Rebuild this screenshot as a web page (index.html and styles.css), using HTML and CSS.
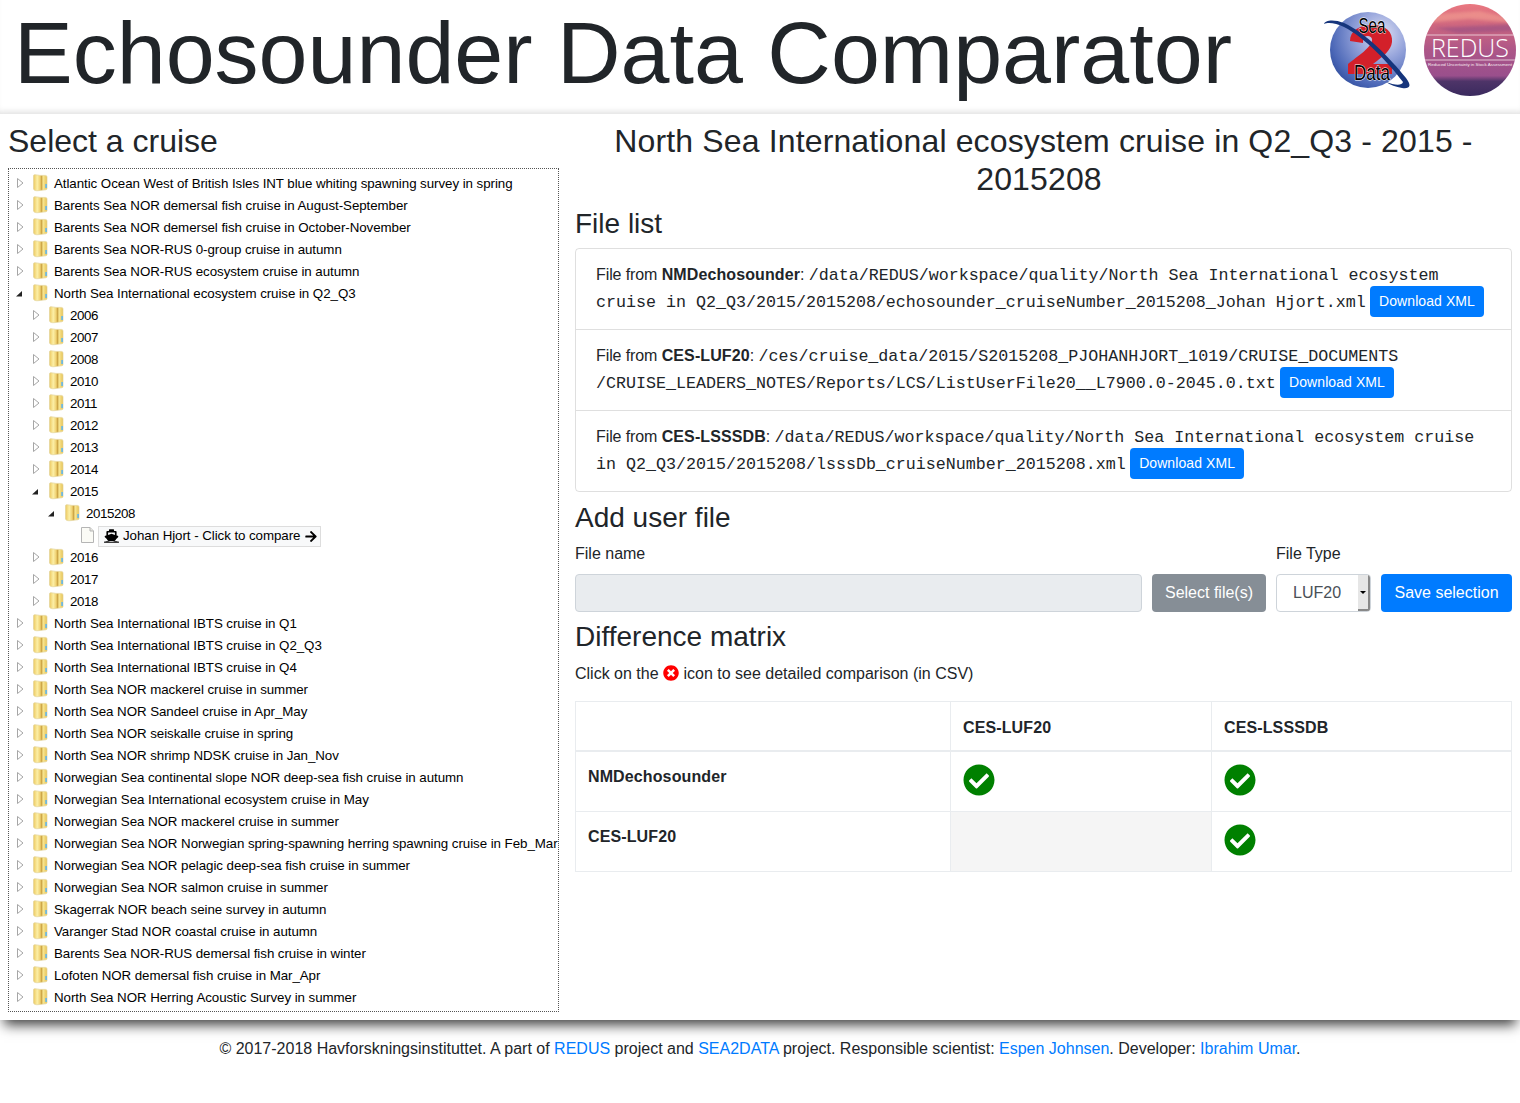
FILE: index.html
```html
<!DOCTYPE html>
<html lang="en">
<head>
<meta charset="utf-8">
<title>Echosounder Data Comparator</title>
<link rel="stylesheet" href="styles.css">
</head>
<body>
<svg class="defs" width="0" height="0" aria-hidden="true">
  <defs>
    <linearGradient id="fg" x1="0" x2="1" y1="0" y2="0">
      <stop offset="0" stop-color="#ecc860"/><stop offset=".28" stop-color="#fcefa6"/><stop offset=".5" stop-color="#efd070"/><stop offset=".58" stop-color="#c9a040"/><stop offset=".72" stop-color="#f8e690"/><stop offset="1" stop-color="#e6c258"/>
    </linearGradient>
    <symbol id="folder" viewBox="0 0 15 18">
      <path d="M.5 2Q.5.5 2 .7L7 1.4 12.5 1.4Q14 1.4 14 3V14.5Q14 15.8 12.5 15.8L6 16.6Q1 17.2.5 15Z" fill="url(#fg)" stroke="#e4d49a" stroke-width=".7"/>
      <rect x="12.2" y="10" width="1.8" height="4" fill="#6fb8e0"/>
    </symbol>
    <symbol id="closed" viewBox="0 0 10 12"><path d="M2.5 1.5L8 6 2.5 10.5Z" fill="#fff" stroke="#a6a6a6"/></symbol>
    <symbol id="open" viewBox="0 0 10 12"><path d="M1 9.5H7V4Z" fill="#222"/></symbol>
    <symbol id="check" viewBox="0 0 512 512"><path fill="green" d="M504 256c0 136.967-111.033 248-248 248S8 392.967 8 256 119.033 8 256 8s248 111.033 248 248zM227.314 387.314l184-184c6.248-6.248 6.248-16.379 0-22.627l-22.627-22.627c-6.248-6.249-16.379-6.249-22.628 0L216 308.118l-70.059-70.059c-6.248-6.248-16.379-6.248-22.628 0l-22.627 22.627c-6.248 6.248-6.248 16.379 0 22.627l104 104c6.249 6.249 16.379 6.249 22.628.001z"/></symbol>
  </defs>
</svg>

<header class="top">
  <h1 class="title">Echosounder Data Comparator</h1>
  <div class="logos">
    <svg class="logo-s2d" viewBox="0 0 92 92" role="img" aria-label="Sea2Data">
      <defs>
        <radialGradient id="sphere" cx=".68" cy=".3" r=".9">
          <stop offset="0" stop-color="#dfe2f4"/><stop offset=".35" stop-color="#98a6dc"/><stop offset=".75" stop-color="#4a66b6"/><stop offset="1" stop-color="#1f3d8a"/>
        </radialGradient>
      </defs>
      <circle cx="48" cy="46" r="38" fill="url(#sphere)"/>
      <path d="M30 37C30 27 39 21 52 21 66 21 73 28 72 38 71 47 63 52 53 60H72V70H28V60C38 52 52 43 52 36 52 33 50 32 47 32 44 32 43 35 43 39Z" fill="#d3202a"/>
      <path transform="translate(2 0)" d="M2 20C3 16 12 15 22 19 44 29 68 54 84 74 90 82 88 85 80 84 74 83 68 81 64 78 72 81 80 82 81 78 66 58 42 33 22 23 14 19 6 18 2 20Z" fill="#16357c"/>
      <text class="s2d-t" x="52" y="29" text-anchor="middle" textLength="27" lengthAdjust="spacingAndGlyphs">Sea</text>
      <text class="s2d-t" x="52" y="76" text-anchor="middle" textLength="36" lengthAdjust="spacingAndGlyphs">Data</text>
    </svg>
    <svg class="logo-redus" viewBox="0 0 92 92" role="img" aria-label="REDUS">
      <defs>
        <linearGradient id="sunset" x1="0" x2="0" y1="0" y2="1">
          <stop offset="0" stop-color="#ea7880"/><stop offset=".22" stop-color="#d0687f"/><stop offset=".5" stop-color="#ad5688"/><stop offset=".78" stop-color="#9a4f8c"/><stop offset=".84" stop-color="#4e3468"/><stop offset="1" stop-color="#3a2a5e"/>
        </linearGradient>
        <clipPath id="redusclip"><circle cx="46" cy="46" r="46"/></clipPath>
        <filter id="soft" x="-10%" y="-50%" width="120%" height="200%"><feGaussianBlur stdDeviation="1.6"/></filter>
      </defs>
      <circle cx="46" cy="46" r="46" fill="url(#sunset)"/>
      <g clip-path="url(#redusclip)">
        <path d="M0 11L55 7 92 15V19L45 15 0 19Z" fill="#f7a694" opacity=".55" filter="url(#soft)"/>
        <path d="M10 24L92 20V27L34 29Z" fill="#8a4a84" opacity=".5" filter="url(#soft)"/>
        <path d="M0 31H92M0 56H92" stroke="#f3dfe6" stroke-width=".8"/>
      </g>
      <text class="redus-t" x="46" y="53" text-anchor="middle" textLength="78" lengthAdjust="spacingAndGlyphs">REDUS</text>
      <text class="redus-s" x="46" y="62" text-anchor="middle" textLength="84" lengthAdjust="spacingAndGlyphs">Reduced Uncertainty in Stock Assessment</text>
    </svg>
  </div>
</header>

<main class="main">
  <section class="left">
    <h2 class="head">Select a cruise</h2>
    <ul class="tree">
      <li class="row"><svg class="tw"><use href="#closed"/></svg><svg class="fo"><use href="#folder"/></svg><span>Atlantic Ocean West of British Isles INT blue whiting spawning survey in spring</span></li>
      <li class="row"><svg class="tw"><use href="#closed"/></svg><svg class="fo"><use href="#folder"/></svg><span>Barents Sea NOR demersal fish cruise in August-September</span></li>
      <li class="row"><svg class="tw"><use href="#closed"/></svg><svg class="fo"><use href="#folder"/></svg><span>Barents Sea NOR demersel fish cruise in October-November</span></li>
      <li class="row"><svg class="tw"><use href="#closed"/></svg><svg class="fo"><use href="#folder"/></svg><span>Barents Sea NOR-RUS 0-group cruise in autumn</span></li>
      <li class="row"><svg class="tw"><use href="#closed"/></svg><svg class="fo"><use href="#folder"/></svg><span>Barents Sea NOR-RUS ecosystem cruise in autumn</span></li>
      <li class="row"><svg class="tw"><use href="#open"/></svg><svg class="fo"><use href="#folder"/></svg><span>North Sea International ecosystem cruise in Q2_Q3</span></li>
      <li class="row l2"><svg class="tw"><use href="#closed"/></svg><svg class="fo"><use href="#folder"/></svg><span>2006</span></li>
      <li class="row l2"><svg class="tw"><use href="#closed"/></svg><svg class="fo"><use href="#folder"/></svg><span>2007</span></li>
      <li class="row l2"><svg class="tw"><use href="#closed"/></svg><svg class="fo"><use href="#folder"/></svg><span>2008</span></li>
      <li class="row l2"><svg class="tw"><use href="#closed"/></svg><svg class="fo"><use href="#folder"/></svg><span>2010</span></li>
      <li class="row l2"><svg class="tw"><use href="#closed"/></svg><svg class="fo"><use href="#folder"/></svg><span>2011</span></li>
      <li class="row l2"><svg class="tw"><use href="#closed"/></svg><svg class="fo"><use href="#folder"/></svg><span>2012</span></li>
      <li class="row l2"><svg class="tw"><use href="#closed"/></svg><svg class="fo"><use href="#folder"/></svg><span>2013</span></li>
      <li class="row l2"><svg class="tw"><use href="#closed"/></svg><svg class="fo"><use href="#folder"/></svg><span>2014</span></li>
      <li class="row l2"><svg class="tw"><use href="#open"/></svg><svg class="fo"><use href="#folder"/></svg><span>2015</span></li>
      <li class="row l3"><svg class="tw"><use href="#open"/></svg><svg class="fo"><use href="#folder"/></svg><span>2015208</span></li>
      <li class="row l4">
        <svg class="page" viewBox="0 0 13 16"><path d="M.5.5H9L12.5 4V15.5H.5Z" fill="#fbfbf6" stroke="#b5b5b5"/><path d="M9 .5V4H12.5" fill="#e6e6e0" stroke="#b5b5b5"/></svg>
        <a class="leaf">
          <svg class="ship" viewBox="0 0 640 512"><path d="M224 24C224 11 235 0 248 0H392C405 0 416 11 416 24V64H480C498 64 512 78 512 96V236L554 250C577 257 584 286 567 303L497 373C480 400 470 420 452 432 420 445 388 440 320 440 252 440 220 445 188 432 170 420 160 400 143 373L73 303C56 286 63 257 86 250L128 236V96C128 78 142 64 160 64H224ZM192 128V216L320 175 448 216V128Z"/><path d="M40 468C90 468 120 452 160 452 200 452 260 476 320 476 380 476 440 452 480 452 520 452 550 468 600 468V512H40Z"/></svg>
          <span>Johan Hjort - Click to compare</span>
          <svg class="arrow" viewBox="0 0 448 512"><path d="M190.5 66.9l22.2-22.2c9.4-9.4 24.6-9.4 33.9 0L441 239c9.4 9.4 9.4 24.6 0 33.9L246.6 467.3c-9.4 9.4-24.6 9.4-33.9 0l-22.2-22.2c-9.5-9.5-9.3-25 .4-34.3L311.4 296H24c-13.3 0-24-10.7-24-24v-32c0-13.3 10.7-24 24-24h287.4L190.9 101.2c-9.8-9.3-10-24.8-.4-34.3z"/></svg>
        </a>
      </li>
      <li class="row l2"><svg class="tw"><use href="#closed"/></svg><svg class="fo"><use href="#folder"/></svg><span>2016</span></li>
      <li class="row l2"><svg class="tw"><use href="#closed"/></svg><svg class="fo"><use href="#folder"/></svg><span>2017</span></li>
      <li class="row l2"><svg class="tw"><use href="#closed"/></svg><svg class="fo"><use href="#folder"/></svg><span>2018</span></li>
      <li class="row"><svg class="tw"><use href="#closed"/></svg><svg class="fo"><use href="#folder"/></svg><span>North Sea International IBTS cruise in Q1</span></li>
      <li class="row"><svg class="tw"><use href="#closed"/></svg><svg class="fo"><use href="#folder"/></svg><span>North Sea International IBTS cruise in Q2_Q3</span></li>
      <li class="row"><svg class="tw"><use href="#closed"/></svg><svg class="fo"><use href="#folder"/></svg><span>North Sea International IBTS cruise in Q4</span></li>
      <li class="row"><svg class="tw"><use href="#closed"/></svg><svg class="fo"><use href="#folder"/></svg><span>North Sea NOR mackerel cruise in summer</span></li>
      <li class="row"><svg class="tw"><use href="#closed"/></svg><svg class="fo"><use href="#folder"/></svg><span>North Sea NOR Sandeel cruise in Apr_May</span></li>
      <li class="row"><svg class="tw"><use href="#closed"/></svg><svg class="fo"><use href="#folder"/></svg><span>North Sea NOR seiskalle cruise in spring</span></li>
      <li class="row"><svg class="tw"><use href="#closed"/></svg><svg class="fo"><use href="#folder"/></svg><span>North Sea NOR shrimp NDSK cruise in Jan_Nov</span></li>
      <li class="row"><svg class="tw"><use href="#closed"/></svg><svg class="fo"><use href="#folder"/></svg><span>Norwegian Sea continental slope NOR deep-sea fish cruise in autumn</span></li>
      <li class="row"><svg class="tw"><use href="#closed"/></svg><svg class="fo"><use href="#folder"/></svg><span>Norwegian Sea International ecosystem cruise in May</span></li>
      <li class="row"><svg class="tw"><use href="#closed"/></svg><svg class="fo"><use href="#folder"/></svg><span>Norwegian Sea NOR mackerel cruise in summer</span></li>
      <li class="row"><svg class="tw"><use href="#closed"/></svg><svg class="fo"><use href="#folder"/></svg><span>Norwegian Sea NOR Norwegian spring-spawning herring spawning cruise in Feb_Mar</span></li>
      <li class="row"><svg class="tw"><use href="#closed"/></svg><svg class="fo"><use href="#folder"/></svg><span>Norwegian Sea NOR pelagic deep-sea fish cruise in summer</span></li>
      <li class="row"><svg class="tw"><use href="#closed"/></svg><svg class="fo"><use href="#folder"/></svg><span>Norwegian Sea NOR salmon cruise in summer</span></li>
      <li class="row"><svg class="tw"><use href="#closed"/></svg><svg class="fo"><use href="#folder"/></svg><span>Skagerrak NOR beach seine survey in autumn</span></li>
      <li class="row"><svg class="tw"><use href="#closed"/></svg><svg class="fo"><use href="#folder"/></svg><span>Varanger Stad NOR coastal cruise in autumn</span></li>
      <li class="row"><svg class="tw"><use href="#closed"/></svg><svg class="fo"><use href="#folder"/></svg><span>Barents Sea NOR-RUS demersal fish cruise in winter</span></li>
      <li class="row"><svg class="tw"><use href="#closed"/></svg><svg class="fo"><use href="#folder"/></svg><span>Lofoten NOR demersal fish cruise in Mar_Apr</span></li>
      <li class="row"><svg class="tw"><use href="#closed"/></svg><svg class="fo"><use href="#folder"/></svg><span>North Sea NOR Herring Acoustic Survey in summer</span></li>
    </ul>
  </section>

  <section class="right">
    <h2 class="head head-cruise">North Sea International ecosystem cruise in Q2_Q3 - 2015 - 2015208&nbsp;</h2>
    <h3 class="sub">File list</h3>
    <ul class="files">
      <li class="file">File from <b>NMDechosounder</b>: <code>/data/REDUS/workspace/quality/North Sea International ecosystem cruise in Q2_Q3/2015/2015208/echosounder_cruiseNumber_2015208_Johan Hjort.xml</code> <a class="btn btn-sm">Download XML</a></li>
      <li class="file">File from <b>CES-LUF20</b>: <code>/ces/cruise_data/2015/S2015208_PJOHANHJORT_1019/CRUISE_DOCUMENTS<br>/CRUISE_LEADERS_NOTES/Reports/LCS/ListUserFile20__L7900.0-2045.0.txt</code> <a class="btn btn-sm">Download XML</a></li>
      <li class="file">File from <b>CES-LSSSDB</b>: <code>/data/REDUS/workspace/quality/North Sea International ecosystem cruise in Q2_Q3/2015/2015208/lsssDb_cruiseNumber_2015208.xml</code> <a class="btn btn-sm">Download XML</a></li>
    </ul>
    <h3 class="sub">Add user file</h3>
    <form class="upload">
      <div class="field grow">
        <label class="lab">File name</label>
        <div class="ctl-row">
          <div class="readonly"></div>
          <a class="btn btn-grey">Select file(s)</a>
        </div>
      </div>
      <div class="field">
        <label class="lab">File Type</label>
        <div class="ctl-row">
          <div class="pick"><span class="pick-val">LUF20</span><span class="pick-btn"><i class="caret"></i></span></div>
          <a class="btn btn-save">Save selection</a>
        </div>
      </div>
    </form>
    <h3 class="sub">Difference matrix</h3>
    <p class="hint">Click on the <svg class="x-ic" viewBox="0 0 512 512"><path fill="red" d="M256 8C119 8 8 119 8 256s111 248 248 248 248-111 248-248S393 8 256 8zm121.6 313.1c4.7 4.7 4.7 12.3 0 17L338 377.6c-4.7 4.7-12.3 4.7-17 0L256 312l-65.1 65.6c-4.7 4.7-12.3 4.7-17 0L134.4 338c-4.7-4.7-4.7-12.3 0-17l65.6-65-65.6-65.1c-4.7-4.7-4.7-12.3 0-17l39.6-39.6c4.7-4.7 12.3-4.7 17 0l65 65.7 65.1-65.6c4.7-4.7 12.3-4.7 17 0l39.6 39.6c4.7 4.7 4.7 12.3 0 17L312 256l65.6 65.1z"/></svg> icon to see detailed comparison (in CSV)</p>
    <table class="matrix">
      <thead>
        <tr><th class="c1"></th><th class="c2">CES-LUF20</th><th>CES-LSSSDB</th></tr>
      </thead>
      <tbody>
        <tr class="row-first"><th>NMDechosounder</th><td><svg class="ok"><use href="#check"/></svg></td><td><svg class="ok"><use href="#check"/></svg></td></tr>
        <tr><th>CES-LUF20</th><td class="na"></td><td><svg class="ok"><use href="#check"/></svg></td></tr>
      </tbody>
    </table>
  </section>
</main>

<footer class="foot">© 2017-2018 Havforskningsinstituttet. A part of <a>REDUS</a> project and <a>SEA2DATA</a> project. Responsible scientist: <a>Espen Johnsen</a>. Developer: <a>Ibrahim Umar</a>.</footer>
</body>
</html>
```
FILE: styles.css
```css
* { box-sizing: border-box; }
html, body { margin: 0; padding: 0; }
body {
  font-family: "Liberation Sans", Arial, sans-serif;
  font-size: 16px;
  line-height: 1.5;
  color: #212529;
  background: #fff;
  overflow-x: hidden;
}
.defs { position: absolute; }

.top {
  height: 114px;
  display: flex;
  justify-content: space-between;
  padding: 5px 4px 0 14px;
  box-shadow: inset 0 -6px 6px -4px rgba(0,0,0,.12);
}
.title {
  margin: 0;
  font-size: 88px;
  font-weight: 400;
  line-height: 96px;
  white-space: nowrap;
}
.logos { display: flex; gap: 12px; margin-top: -1px; }
.logo-s2d { width: 92px; height: 92px; }
.logo-redus { width: 92px; height: 92px; }
.s2d-t { font-family: "Liberation Sans", sans-serif; font-size: 22px; fill: #000; stroke: #fff; stroke-width: 1px; paint-order: stroke; }
.redus-t { font-family: "Open Sans", "Liberation Sans", sans-serif; font-weight: 300; font-size: 26px; fill: #fff; }
.redus-s { font-family: "Liberation Sans", sans-serif; font-size: 4.4px; fill: #f5e8ee; }

.main {
  display: flex;
  gap: 16px;
  padding: 8px 8px 0;
  height: 906px;
  box-shadow: 0 9px 12px -4px rgba(0,0,0,.75);
  position: relative;
}
.left { width: 551px; flex: none; }
.right { flex: 1; min-width: 0; }
.head {
  margin: 0 0 8px;
  font-size: 32px;
  font-weight: 400;
  line-height: 38px;
}
.head-cruise { margin-bottom: 9px; text-align: center; letter-spacing: .14px; }
.sub {
  margin: 0 0 8px;
  font-size: 28px;
  font-weight: 400;
  line-height: 33.6px;
}

.tree {
  list-style: none;
  margin: 0;
  padding: 4px 0 2px 6px;
  border: 1px dotted #555;
  height: 844px;
  font-size: 13.33px;
  letter-spacing: -.06px;
  color: #000;
}
.row {
  height: 22px;
  display: flex;
  align-items: center;
  white-space: nowrap;
  line-height: 22px;
}
.l2 { padding-left: 16px; letter-spacing: -.4px; }
.l3 { padding-left: 32px; letter-spacing: -.4px; }
.l4 { padding-left: 66px; }
.tw { width: 10px; height: 12px; flex: none; margin-top: -2px; }
.fo { width: 15px; height: 18px; flex: none; margin: -3px 6px 0 8px; }
.page { width: 13px; height: 16px; flex: none; margin: -2px 4px 0 0; }
.leaf {
  display: flex;
  align-items: center;
  gap: 3px;
  height: 21px;
  padding: 0 3px 0 4px;
  background: #f8f9fa;
  border: 1px solid #ddd;
}
.ship { width: 17px; height: 16px; }
.arrow { width: 12px; height: 13px; margin-left: 2px; }

.files {
  list-style: none;
  margin: -1px 0 9px;
  padding: 0;
  border: 1px solid rgba(0,0,0,.125);
  border-radius: 4px;
}
.file { padding: 14px 20px 12px; letter-spacing: -.1px; }
.file + .file { border-top: 1px solid rgba(0,0,0,.125); }
.file b { letter-spacing: .1px; }
code { font-family: "Liberation Mono", monospace; font-size: 16.67px; color: #212529; letter-spacing: 0; }
.btn {
  display: inline-block;
  border-radius: 4px;
  color: #fff;
  background: #007bff;
  text-align: center;
}
.btn-sm { font-size: 14px; line-height: 21px; padding: 5px 9px; vertical-align: 1px; margin-top: -2px; letter-spacing: .08px; }

.upload { display: flex; gap: 10px; margin-bottom: 8px; }
.field { flex: none; }
.grow { flex: 1; }
.lab { display: block; line-height: 24px; margin-bottom: 8px; }
.ctl-row { display: flex; gap: 10px; }
.readonly {
  flex: 1;
  height: 38px;
  background: #e9ecef;
  border: 1px solid #ced4da;
  border-radius: 4px;
}
.btn-grey, .btn-save { line-height: 24px; height: 38px; padding: 7px 0; }
.btn-grey { background: #868e96; width: 114px; }
.btn-save { width: 131px; }
.pick {
  width: 95px;
  height: 38px;
  display: flex;
  border: 1px solid #ced4da;
  border-radius: 4px;
  overflow: hidden;
}
.pick-val { flex: 1; padding-left: 16px; line-height: 36px; color: #495057; }
.pick-btn {
  width: 12px;
  display: flex;
  align-items: center;
  justify-content: center;
  background: #e6e6e6;
  border-right: 2px solid #888;
  border-bottom: 2px solid #888;
}
.caret { width: 0; height: 0; border: 3px solid transparent; border-top: 3px solid #000; border-bottom: 0; }

.hint { margin: 0 0 15px; }
.x-ic { width: 16px; height: 16px; vertical-align: -2px; }
.matrix { width: 100%; border-collapse: collapse; table-layout: fixed; }
.matrix th, .matrix td {
  border: 1px solid #e9ecef;
  padding: 13px 12px 12px;
  text-align: left;
  vertical-align: top;
  line-height: 24px;
  letter-spacing: .12px;
}
.matrix thead th { border-bottom-width: 2px; height: 48px; padding-top: 14px; padding-bottom: 10px; }
.matrix tbody th, .matrix tbody td { height: 60px; }
.matrix .row-first th, .matrix .row-first td { height: 61px; }
.matrix td { padding-top: 12px; padding-bottom: 0; }
.c1 { width: 375px; }
.c2 { width: 261px; }
.na { background: #f5f5f5; }
.ok { width: 32px; height: 32px; display: block; }

.foot {
  text-align: center;
  padding-top: 17px;
  height: 83px;
}
.foot a { color: #007bff; }
```
